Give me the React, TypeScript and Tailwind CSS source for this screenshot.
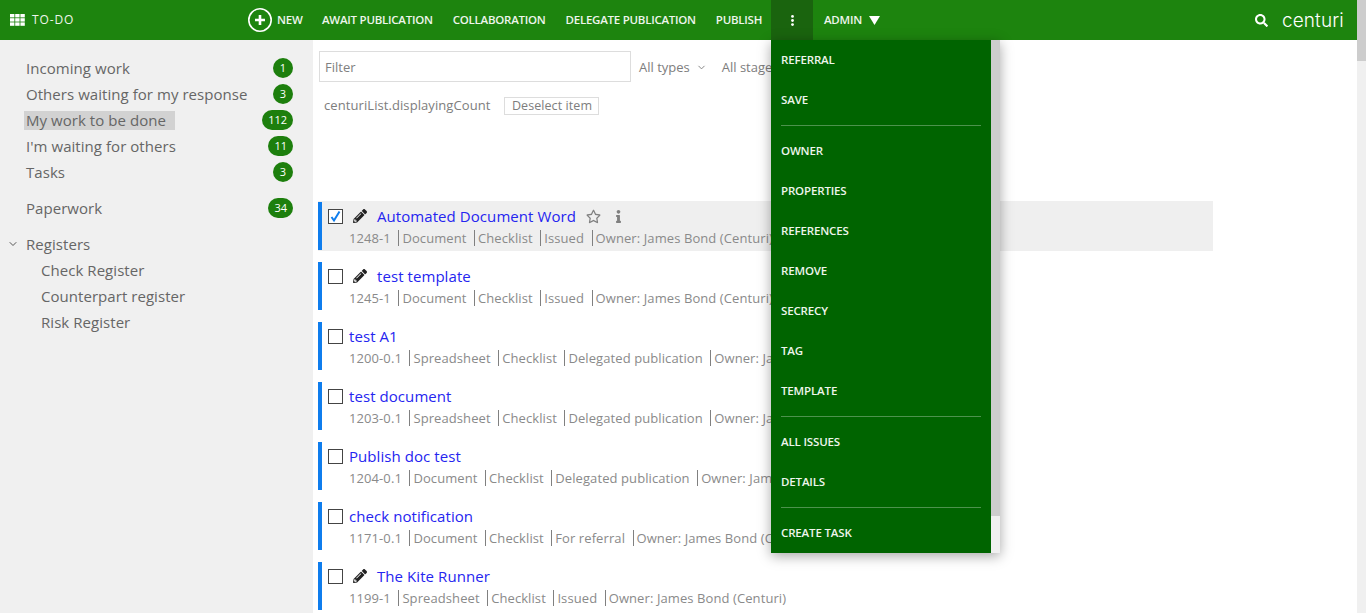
import { ChevronDown } from "lucide-react";
import { FaInfo, FaPencilAlt, FaRegStar, FaSearch } from "react-icons/fa";

const navItems = ["AWAIT PUBLICATION", "COLLABORATION", "DELEGATE PUBLICATION", "PUBLISH"];

const menuGroups = [
  ["REFERRAL", "SAVE"],
  ["OWNER", "PROPERTIES", "REFERENCES", "REMOVE", "SECRECY", "TAG", "TEMPLATE"],
  ["ALL ISSUES", "DETAILS"],
  ["CREATE TASK"],
];

const sideTop = [
  { label: "Incoming work", count: "1" },
  { label: "Others waiting for my response", count: "3" },
  { label: "My work to be done", count: "112", active: true },
  { label: "I'm waiting for others", count: "11" },
  { label: "Tasks", count: "3" },
];

const rows = [
  { title: "Automated Document Word", pencil: true, checked: true, meta: ["1248-1", "Document", "Checklist", "Issued"] },
  { title: "test template", pencil: true, meta: ["1245-1", "Document", "Checklist", "Issued"] },
  { title: "test A1", meta: ["1200-0.1", "Spreadsheet", "Checklist", "Delegated publication"] },
  { title: "test document", meta: ["1203-0.1", "Spreadsheet", "Checklist", "Delegated publication"] },
  { title: "Publish doc test", meta: ["1204-0.1", "Document", "Checklist", "Delegated publication"] },
  { title: "check notification", meta: ["1171-0.1", "Document", "Checklist", "For referral"] },
  { title: "The Kite Runner", pencil: true, meta: ["1199-1", "Spreadsheet", "Checklist", "Issued"] },
];

function Badge({ children }: { children: string }) {
  return (
    <span className="flex h-[20px] min-w-[20px] items-center justify-center rounded-full bg-[#1d7f0d] px-[6px] text-[11px] tracking-normal text-white">
      {children}
    </span>
  );
}

function GridIcon() {
  return (
    <svg width="15" height="12" viewBox="0 0 15 12" fill="#fff">
      {[0, 4.2, 8.4].map((y) =>
        [0, 5.2, 10.4].map((x) => <rect key={`${x}-${y}`} x={x} y={y} width="4.4" height="3.4" />)
      )}
    </svg>
  );
}

function Row({ row }: { row: (typeof rows)[number] }) {
  return (
    <div className={`mb-[10px] flex h-[50px] w-[895px] shrink-0 items-center ${row.checked ? "bg-[#efefef]" : ""}`}>
      <div className="h-[48px] flex-1 border-l-4 border-[#0f7ded] pl-[6px] pt-[2px]">
        <div className="flex h-[24px] items-center">
          <span className="flex h-[15px] w-[15px] shrink-0 items-center justify-center border border-[#444] bg-white">
            {row.checked && (
              <svg width="13" height="13" viewBox="0 0 13 13" fill="none" stroke="#0f7ded" strokeWidth="2">
                <path d="M2.5 7 L5 10.5 L10.5 1.5" />
              </svg>
            )}
          </span>
          {row.pencil && <FaPencilAlt className="ml-[10px] mr-[10px] h-[14px] w-[14px] text-[#222]" />}
          <span className={`text-[15px] tracking-[0.07px] text-[#2525f0] ${row.pencil ? "" : "ml-[6px]"}`}>{row.title}</span>
          {row.checked && (
            <>
              <FaRegStar className="ml-[10px] h-[15px] w-[15px] text-[#808080]" />
              <FaInfo className="ml-[11px] h-[13px] w-[13px] text-[#808080]" />
            </>
          )}
        </div>
        <div className="ml-[21px] flex h-[20px] items-center whitespace-nowrap text-[13px] tracking-[0.09px] text-[#8a8a8a]">
          {row.meta.map((m, i) => (
            <span key={m} className={`mr-[7.5px] leading-[16px] ${i > 0 ? "border-l border-[#808080] pl-[3px]" : ""}`}>
              {m}
            </span>
          ))}
          <span className="border-l border-[#808080] pl-[3px] leading-[16px]">Owner: James Bond (Centuri)</span>
        </div>
      </div>
    </div>
  );
}

export default function App() {
  return (
    <div className="flex h-[613px] w-[1366px] overflow-hidden bg-white font-['Open_Sans',sans-serif]">
      <div className="flex w-[1357px] flex-col">
        <header className="flex h-[40px] shrink-0 items-center bg-[#1d840e] text-[11.5px] font-semibold tracking-[-0.25px] text-[#eef5ec]">
          <div className="ml-[10px] flex w-[65px] items-center">
            <GridIcon />
            <span className="ml-[7px] text-[12px] font-normal tracking-[0.9px]">TO-DO</span>
          </div>
          <svg className="ml-[173px]" width="24" height="24" viewBox="0 0 24 24" fill="none" stroke="#fff">
            <circle cx="12" cy="12" r="11.2" strokeWidth="1.6" />
            <path d="M12 7 V17 M7 12 H17" strokeWidth="2.6" />
          </svg>
          <span className="ml-[5px] w-[25px]">NEW</span>
          <nav className="ml-[20px] flex w-[439px] shrink-0 gap-[20px]">
            {navItems.map((n) => (
              <span key={n} className="whitespace-nowrap">
                {n}
              </span>
            ))}
          </nav>
          <div className="relative ml-[10px] flex h-[40px] w-[42px] items-center justify-center bg-[#1a640e]">
            <svg width="3" height="11" viewBox="0 0 3 11" fill="#fff">
              <circle cx="1.5" cy="1.4" r="1.4" />
              <circle cx="1.5" cy="5.5" r="1.4" />
              <circle cx="1.5" cy="9.6" r="1.4" />
            </svg>
            <div className="absolute left-0 top-[40px] z-10 flex h-[513px] w-[229px] shadow-[0_3px_12px_rgba(0,0,0,0.35)]">
              <div className="w-[220px] bg-[#006400] px-[10px] tracking-[-0.15px]">
                {menuGroups.map((g, i) => (
                  <div key={g[0]} className={i > 0 ? "mt-[5px] border-t border-[#ffffff4d] pt-[5px]" : ""}>
                    {g.map((m) => (
                      <div key={m} className="flex h-[40px] items-center whitespace-nowrap">
                        {m}
                      </div>
                    ))}
                  </div>
                ))}
              </div>
              <div className="flex w-[9px] flex-col bg-[#f0f0f0]">
                <div className="h-[476px] bg-[#cdcdcd]" />
              </div>
            </div>
          </div>
          <span className="ml-[11px]">ADMIN</span>
          <svg className="ml-[7px]" width="11" height="9" viewBox="0 0 11 9" fill="#fff">
            <path d="M0 0 H11 L5.5 9 Z" />
          </svg>
          <FaSearch className="ml-auto h-[13px] w-[13px] text-white" />
          <span className="ml-[14px] mr-[14px] w-[61px] font-['Inter',sans-serif] text-[19px] font-light leading-none tracking-[0.1px] text-white">centuri</span>
        </header>

        <div className="flex min-h-0 flex-1">
          <aside className="w-[313px] shrink-0 bg-[#f0f0f0] pl-[24px] pr-[20px] pt-[15px] text-[15px] tracking-[0.05px] text-[#666]">
            {sideTop.map((s) => (
              <div key={s.label} className="flex h-[26px] items-center justify-between">
                <span className={`pl-[2px] leading-[19px] ${s.active ? "bg-[#d2d2d2] pr-[9px]" : "pr-[2px]"}`}>{s.label}</span>
                <Badge>{s.count}</Badge>
              </div>
            ))}
            <div className="mt-[10px] flex h-[26px] items-center justify-between">
              <span className="px-[2px]">Paperwork</span>
              <Badge>34</Badge>
            </div>
            <div className="mt-[10px] flex h-[26px] items-center">
              <ChevronDown className="-ml-[17px] mr-[5px] h-[12px] w-[12px] text-[#555]" />
              <span className="px-[2px]">Registers</span>
            </div>
            {["Check Register", "Counterpart register", "Risk Register"].map((r) => (
              <div key={r} className="flex h-[26px] items-center pl-[17px]">
                {r}
              </div>
            ))}
          </aside>

          <main className="min-w-0 flex-1 overflow-hidden pl-[5px] pt-[11px] text-[#7d7d7d]">
            <div className="ml-[1px] flex h-[31px] items-center text-[13px]">
              <div className="flex h-[31px] w-[312px] items-center border border-[#ddd] px-[5px] pt-[2px] text-[#808080]">Filter</div>
              <span className="ml-[8px] pt-[2px]">All types</span>
              <ChevronDown className="ml-[6px] mt-[2px] h-[11px] w-[11px]" />
              <span className="ml-[15px] pt-[2px]">All stages</span>
            </div>
            <div className="ml-[6px] mt-[15px] flex h-[18px] items-center text-[13px] tracking-[0.08px]">
              <span>centuriList.displayingCount</span>
              <span className="ml-[14px] flex h-[18px] w-[95px] items-center justify-center border border-[#ddd] text-[12.5px]">
                Deselect item
              </span>
            </div>
            <div className="mt-[86px]">
              {rows.map((r) => (
                <Row key={r.title} row={r} />
              ))}
            </div>
          </main>
        </div>
      </div>
      <div className="flex w-[9px] shrink-0 flex-col bg-[#f0f0f0]">
        <div className="h-[61px] bg-[#cdcdcd]" />
      </div>
    </div>
  );
}
